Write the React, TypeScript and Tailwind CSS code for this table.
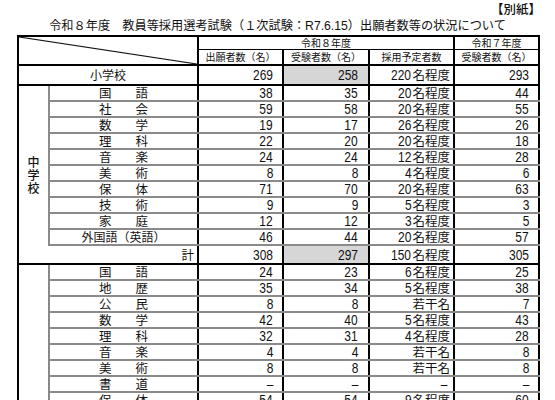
// 令和8年度 教員等採用選考試験 出願者数等の状況 — table sheet

const FONT = "font-['Liberation_Sans','Noto_Sans_CJK_JP',sans-serif]";
const JP = "font-['Noto_Sans_CJK_JP',sans-serif]";

type Row = { name: string; a: string; b: string; plan: string; prev: string };

const elementary: Row = { name: "小学校", a: "269", b: "258", plan: "220名程度", prev: "293" };

const junior: Row[] = [
  { name: "国語", a: "38", b: "35", plan: "20名程度", prev: "44" },
  { name: "社会", a: "59", b: "58", plan: "20名程度", prev: "55" },
  { name: "数学", a: "19", b: "17", plan: "26名程度", prev: "26" },
  { name: "理科", a: "22", b: "20", plan: "20名程度", prev: "18" },
  { name: "音楽", a: "24", b: "24", plan: "12名程度", prev: "28" },
  { name: "美術", a: "8", b: "8", plan: "4名程度", prev: "6" },
  { name: "保体", a: "71", b: "70", plan: "20名程度", prev: "63" },
  { name: "技術", a: "9", b: "9", plan: "5名程度", prev: "3" },
  { name: "家庭", a: "12", b: "12", plan: "3名程度", prev: "5" },
  { name: "外国語（英語）", a: "46", b: "44", plan: "20名程度", prev: "57" },
];

const juniorTotal: Row = { name: "計", a: "308", b: "297", plan: "150名程度", prev: "305" };

const senior: Row[] = [
  { name: "国語", a: "24", b: "23", plan: "6名程度", prev: "25" },
  { name: "地歴", a: "35", b: "34", plan: "5名程度", prev: "38" },
  { name: "公民", a: "8", b: "8", plan: "若干名", prev: "7" },
  { name: "数学", a: "42", b: "40", plan: "5名程度", prev: "43" },
  { name: "理科", a: "32", b: "31", plan: "4名程度", prev: "28" },
  { name: "音楽", a: "4", b: "4", plan: "若干名", prev: "8" },
  { name: "美術", a: "8", b: "8", plan: "若干名", prev: "8" },
  { name: "書道", a: "–", b: "–", plan: "–", prev: "–" },
  { name: "保体", a: "54", b: "54", plan: "9名程度", prev: "60" },
];

const GRAY = "border-b-2 border-b-[#8a8a8a]";
const BLACK = "border-b-2 border-b-black";

// narrow digits, like the sheet's condensed number face
function Num({ v }: { v: string }) {
  return (
    <span className="inline-block origin-right scale-x-[0.8] text-[15px] leading-[14px]">{v}</span>
  );
}

function Plan({ value }: { value: string }) {
  const m = value.match(/^(\d*)(.*)$/);
  const digits = m ? m[1] : "";
  const rest = m ? m[2] : value;
  if (rest === "–" || rest === "") return <Num v={value} />;
  return (
    <>
      {digits && (
        <span className="inline-block whitespace-nowrap" style={{ width: digits.length * 6.7 + 1 }}>
          <span className="inline-block origin-left scale-x-[0.8] text-[15px] leading-[14px]">{digits}</span>
        </span>
      )}
      <span className={`${JP} text-[12.5px] leading-[14px]`}>{rest}</span>
    </>
  );
}

function Subject({ name }: { name: string }) {
  if (name.length === 2) {
    return (
      <span className={`${JP} inline-flex w-[49px] justify-between text-[12.5px] leading-[14px]`}>
        <span>{name[0]}</span>
        <span>{name[1]}</span>
      </span>
    );
  }
  return <span className={`${JP} text-[12px] leading-[14px]`}>{name}</span>;
}

function Box({ h, align, pr, children }: { h: string; align: string; pr?: string; children: React.ReactNode }) {
  return <div className={`flex ${h} items-center whitespace-nowrap ${align} ${pr ?? ""}`}>{children}</div>;
}

function DataCells({ r, line, h, shade }: { r: Row; line: string; h: string; shade?: boolean }) {
  return (
    <>
      <td className={`border-r-2 border-r-black ${line} p-0`}>
        <Box h={h} align="justify-end" pr="pr-[9px]">
          <Num v={r.a} />
        </Box>
      </td>
      <td className={`border-r-2 border-r-black ${line} p-0 ${shade ? "bg-[#d6d6d6]" : ""}`}>
        <Box h={h} align="justify-end" pr="pr-[10px]">
          <Num v={r.b} />
        </Box>
      </td>
      <td className={`border-r-2 border-r-black ${line} p-0`}>
        <Box h={h} align="justify-end" pr={r.plan === "–" ? "pr-[6px]" : "pr-[3px]"}>
          <Plan value={r.plan} />
        </Box>
      </td>
      <td className={`${line} p-0`}>
        <Box h={h} align="justify-end" pr="pr-[9px]">
          <Num v={r.prev} />
        </Box>
      </td>
    </>
  );
}

export default function App() {
  return (
    <div className={`h-[400px] w-[555px] overflow-hidden bg-white text-[#111] ${FONT}`}>
      <div className={`${JP} h-[16px] pt-[2px] pr-[14px] text-right text-[12.5px] font-medium leading-[14px]`}>
        【別紙】
      </div>
      <div className={`${JP} h-[19px] text-center text-[12.2px] leading-[18px]`}>
        令和８年度　教員等採用選考試験（１次試験：<span className={FONT}>R7.6.15</span>）出願者数等の状況について
      </div>

      <table className="ml-[17px] w-[521px] table-fixed border-collapse border-2 border-black leading-none">
        <colgroup>
          <col className="w-[31px]" />
          <col className="w-[149px]" />
          <col className="w-[85px]" />
          <col className="w-[86px]" />
          <col className="w-[85px]" />
          <col className="w-[85px]" />
        </colgroup>
        <tbody>
          {/* header */}
          <tr>
            <td rowSpan={2} colSpan={2} className="relative border-r-2 border-b-2 border-r-black border-b-black p-0">
              <svg className="absolute inset-0 h-full w-full" preserveAspectRatio="none" viewBox="0 0 100 100">
                <line x1="0" y1="0" x2="100" y2="100" stroke="#111" strokeWidth="1.2" vectorEffect="non-scaling-stroke" />
              </svg>
            </td>
            <td colSpan={3} className="border-r-2 border-b border-r-black border-b-black p-0">
              <Box h="h-[12px]" align="justify-center">
                <span className={`${JP} text-[10px] leading-[12px]`}>令和８年度</span>
              </Box>
            </td>
            <td className="border-b border-b-black p-0">
              <Box h="h-[12px]" align="justify-center">
                <span className={`${JP} text-[10px] leading-[12px]`}>令和７年度</span>
              </Box>
            </td>
          </tr>
          <tr>
            {["出願者数（名）", "受験者数（名）", "採用予定者数", "受験者数（名）"].map((h, i) => (
              <td key={i} className={`${i < 3 ? "border-r-2 border-r-black" : ""} border-b-2 border-b-black p-0`}>
                <Box h="h-[14px]" align="justify-center">
                  <span className={`${JP} text-[10px] leading-[12px]`}>{h}</span>
                </Box>
              </td>
            ))}
          </tr>

          {/* 小学校 */}
          <tr>
            <td colSpan={2} className={`border-r-2 border-r-black ${BLACK} p-0`}>
              <Box h="h-[18px]" align="justify-center">
                <span className={`${JP} text-[12px] leading-[14px]`}>{elementary.name}</span>
              </Box>
            </td>
            <DataCells r={elementary} line={BLACK} h="h-[18px]" shade />
          </tr>

          {/* 中学校 */}
          {junior.map((r, i) => (
            <tr key={`j${i}`}>
              {i === 0 && (
                <td rowSpan={junior.length + 1} className={`${BLACK} p-0 align-middle`}>
                  <div className={`${JP} flex flex-col items-center text-[12px] font-medium leading-[13px]`}>
                    <span>中</span>
                    <span>学</span>
                    <span>校</span>
                  </div>
                </td>
              )}
              <td className={`border-l-2 border-r-2 border-l-[#8a8a8a] border-r-black ${GRAY} p-0`}>
                <Box h="h-[14px]" align="justify-center">
                  <Subject name={r.name} />
                </Box>
              </td>
              <DataCells r={r} line={GRAY} h="h-[14px]" />
            </tr>
          ))}
          <tr>
            <td className={`border-r-2 border-r-black ${BLACK} p-0`}>
              <Box h="h-[17px]" align="justify-end" pr="pr-[3px]">
                <span className={`${JP} text-[12.5px] leading-[14px]`}>計</span>
              </Box>
            </td>
            <DataCells r={juniorTotal} line={BLACK} h="h-[17px]" shade />
          </tr>

          {/* 高等学校 */}
          {senior.map((r, i) => (
            <tr key={`s${i}`}>
              {i === 0 && <td rowSpan={senior.length} className="p-0" />}
              <td className={`border-l-2 border-r-2 border-l-[#8a8a8a] border-r-black ${GRAY} p-0`}>
                <Box h="h-[14px]" align="justify-center">
                  <Subject name={r.name} />
                </Box>
              </td>
              <DataCells r={r} line={GRAY} h="h-[14px]" />
            </tr>
          ))}
        </tbody>
      </table>
    </div>
  );
}
